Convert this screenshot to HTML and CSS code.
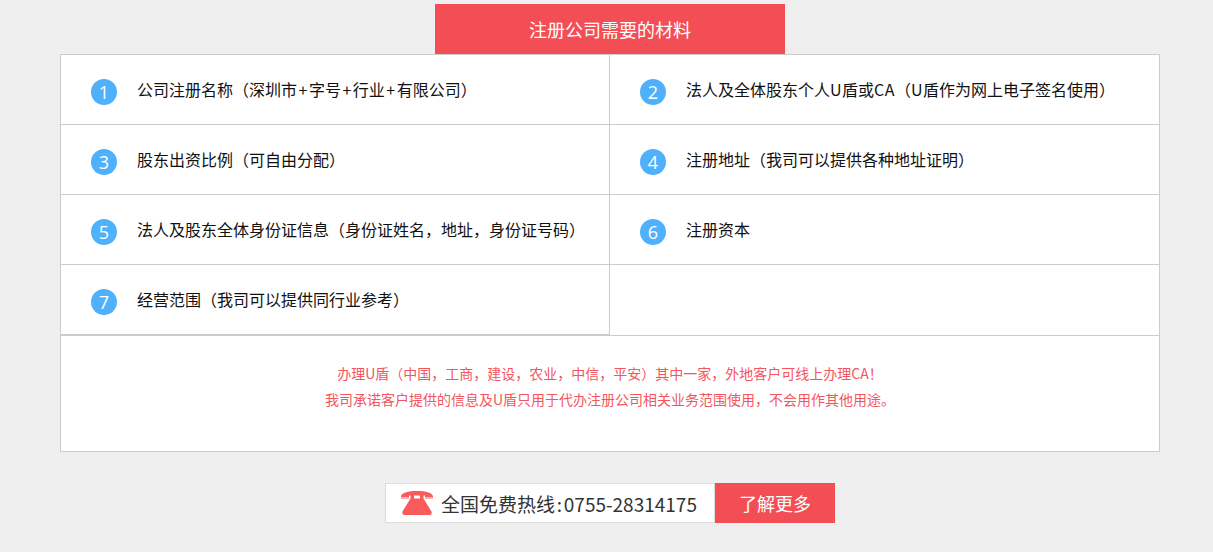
FILE: index.html
```html
<!DOCTYPE html>
<html lang="zh-CN">
<head>
<meta charset="utf-8">
<title>注册公司需要的材料</title>
<link rel="stylesheet" href="styles.css">
</head>
<body>
<main class="page">
  <h2 class="title">注册公司需要的材料</h2>
  <section class="panel">
    <ul class="grid">
      <li class="cell"><span class="num">1</span><span class="label">公司注册名称（深圳市<span class="plus">+</span>字号<span class="plus">+</span>行业<span class="plus">+</span>有限公司）</span></li>
      <li class="cell"><span class="num">2</span><span class="label">法人及全体股东个人<span class="latin">U</span>盾或<span class="latin">CA</span>（<span class="latin">U</span>盾作为网上电子签名使用）</span></li>
      <li class="cell"><span class="num">3</span><span class="label">股东出资比例（可自由分配）</span></li>
      <li class="cell"><span class="num">4</span><span class="label">注册地址（我司可以提供各种地址证明）</span></li>
      <li class="cell"><span class="num">5</span><span class="label">法人及股东全体身份证信息（身份证姓名，地址，身份证号码）</span></li>
      <li class="cell"><span class="num">6</span><span class="label">注册资本</span></li>
      <li class="cell"><span class="num">7</span><span class="label">经营范围（我司可以提供同行业参考）</span></li>
    </ul>
    <div class="note">
      <p>办理U盾（中国，工商，建设，农业，中信，平安）其中一家，外地客户可线上办理CA！</p>
      <p>我司承诺客户提供的信息及U盾只用于代办注册公司相关业务范围使用，不会用作其他用途。</p>
    </div>
  </section>
  <div class="contact">
    <div class="hotline">
      <svg class="phone" viewBox="0 0 32 24" width="32" height="24" aria-hidden="true">
        <path fill="#f95b5b" d="M0 5C1.500 1.500 7 0 16 0s14.500 1.500 16 5v1H24V4.500H8V6H0z"/>
        <path fill="#f95b5b" opacity=".45" d="M0 6h8v2H0zM24 6h8v2h-8z"/>
        <path fill="#f95b5b" d="M9.500 4h3.500v3.500h6V4h3.500v3.500L30.500 20.500c.6 1.600-.2 3.500-1.800 3.500H3.300c-1.600 0-2.400-1.900-1.800-3.500L9.500 7.500z"/>
      </svg>
      <span class="hotline-text">全国免费热线 : 0755-28314175</span>
    </div>
    <a class="more" href="#">了解更多</a>
  </div>
</main>
</body>
</html>
```
FILE: styles.css
```css
* { box-sizing: border-box; }
html, body { margin: 0; padding: 0; }
body {
  background: #efefef;
  font-family: "Noto Sans CJK SC", "Noto Sans", sans-serif;
  color: #222;
}
.page {
  width: 1100px;
  margin-left: 60px;
  padding-top: 4px;
  display: flex;
  flex-direction: column;
  align-items: center;
}
.title {
  width: 350px;
  height: 50px;
  margin: 0;
  background: #f34e56;
  color: #fff;
  font-size: 18px;
  font-weight: 400;
  line-height: 50px;
  text-align: center;
}
.panel {
  width: 1100px;
  height: 398px;
  background: #fff;
  border: 1px solid #ccc;
}
.grid {
  list-style: none;
  margin: 0;
  padding: 0;
  display: grid;
  grid-template-columns: 549px 550px;
  grid-auto-rows: 70px;
  border-bottom: 1px solid #ccc;
}
.cell {
  display: flex;
  align-items: center;
  padding-left: 30px;
  gap: 20px;
  color: #111;
  font-size: 16px;
  border-bottom: 1px solid #ccc;
}
.cell:nth-child(odd) { border-right: 1px solid #ccc; }
.label { margin-bottom: 2px; }
.plus { margin: 0 1.500px; }
.latin { letter-spacing: .5px; }
.cell .num {
  width: 26px;
  height: 26px;
  flex: none;
  margin-top: 4px;
  border-radius: 50%;
  background: #4fb0fc;
  color: #fff;
  font-family: "Open Sans", sans-serif;
  font-size: 18px;
  line-height: 26px;
  text-align: center;
}
.note {
  padding-top: 24px;
  text-align: center;
  color: #f4555e;
  font-size: 14px;
  line-height: 26px;
}
.note p { margin: 0; }
.contact {
  margin-top: 31px;
  display: flex;
  width: 450px;
  height: 40px;
}
.hotline {
  width: 330px;
  background: #fff;
  border: 1px solid #ddd;
  display: flex;
  align-items: center;
  padding-left: 15px;
  gap: 8px;
  font-size: 19px;
  color: #333;
}
.hotline-text { word-spacing: -2.500px; }
.phone { flex: none; }
.more {
  width: 120px;
  background: #f34e56;
  color: #fff;
  font-size: 18px;
  line-height: 40px;
  text-align: center;
  text-decoration: none;
}
```
